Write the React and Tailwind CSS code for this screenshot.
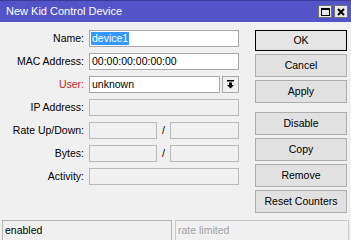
import React from "react";

const font = { fontFamily: '"Liberation Sans", Arial, sans-serif' };

function Label({ children, red }) {
  return (
    <div className={`w-[85px] pr-[1px] text-right text-[10.5px] leading-[17px] ${red ? "text-[#c0282d]" : "text-black"}`}>
      {children}
    </div>
  );
}

function Field({ children, disabled, className = "w-[150px]" }) {
  return (
    <div
      className={`h-[17px] border ${disabled ? "border-[#b9b9b9] bg-[#f0f0f0]" : "border-[#a8a8a8] bg-white"} ${className} flex items-center pl-[2px] text-[10.5px] leading-[15px] text-black overflow-hidden whitespace-nowrap`}
    >
      {children}
    </div>
  );
}

function Row({ label, red, children }) {
  return (
    <div className="flex items-center h-[17px] gap-[4px]">
      <Label red={red}>{label}</Label>
      {children}
    </div>
  );
}

function Btn({ children, ok, className = "h-[23px]" }) {
  return (
    <div
      className={`${className} w-[92px] flex items-center justify-center text-[10.5px] text-black ${ok ? "border border-black bg-[#e5e5e5]" : "border border-[#adadad] bg-[#e1e1e1]"}`}
    >
      {children}
    </div>
  );
}

function Pair() {
  return (
    <div className="flex items-center w-[150px]">
      <Field disabled className="w-[68px]"></Field>
      <span className="w-[13px] text-[10.5px] text-center">/</span>
      <Field disabled className="w-[69px]"></Field>
    </div>
  );
}

export default function App() {
  return (
    <div style={font} className="w-[351px] h-[240px] bg-[#f0f0f0] flex flex-col overflow-hidden">
      <div className="h-[22px] shrink-0 bg-[#5454c9] border-t border-[#3b3b9a] flex items-center justify-between pl-[6px] pr-[3px]">
        <span className="text-[11px] text-white">New Kid Control Device</span>
        <div className="flex gap-[2px]">
          <div className="w-[14px] h-[13px] bg-[#e8e8e8] border border-[#707070] flex items-center justify-center">
            <div className="w-[9px] h-[8px] border border-black border-t-2"></div>
          </div>
          <div className="w-[14px] h-[13px] bg-[#e8e8e8] border border-[#707070] flex items-center justify-center">
            <svg width="8" height="8" viewBox="0 0 8 8">
              <path d="M1 1 L7 7 M7 1 L1 7" stroke="black" strokeWidth="2" />
            </svg>
          </div>
        </div>
      </div>
      <div className="flex flex-1">
        <div className="flex flex-col gap-[6px] pt-[8px] w-[239px]">
          <Row label="Name:">
            <Field>
              <span className="bg-[#3399ff] text-white leading-[13px] px-[1px] -ml-[1px]">device1</span>
            </Field>
          </Row>
          <Row label="MAC Address:">
            <Field>00:00:00:00:00:00</Field>
          </Row>
          <Row label="User:" red>
            <div className="flex items-center w-[150px] gap-[2px]">
              <Field className="w-[131px]">unknown</Field>
              <div className="h-[17px] w-[17px] border border-[#a8a8a8] bg-[#f0f0f0] flex items-center justify-center">
                <svg width="9" height="9" viewBox="0 0 9 9">
                  <rect x="1" y="0" width="7" height="1.5" fill="black" />
                  <path d="M3 2.5 H6 V5 H8 L4.5 8.5 L1 5 H3 Z" fill="black" />
                </svg>
              </div>
            </div>
          </Row>
          <Row label="IP Address:">
            <Field disabled></Field>
          </Row>
          <Row label="Rate Up/Down:">
            <Pair />
          </Row>
          <Row label="Bytes:">
            <Pair />
          </Row>
          <Row label="Activity:">
            <Field disabled></Field>
          </Row>
        </div>
        <div className="ml-[16px] pt-[8px] flex flex-col">
          <Btn ok className="h-[21px]">OK</Btn>
          <div className="h-[3px]" />
          <Btn>Cancel</Btn>
          <div className="h-[3px]" />
          <Btn>Apply</Btn>
          <div className="h-[9px]" />
          <Btn>Disable</Btn>
          <div className="h-[3px]" />
          <Btn>Copy</Btn>
          <div className="h-[3px]" />
          <Btn>Remove</Btn>
          <div className="h-[3px]" />
          <Btn>Reset Counters</Btn>
        </div>
      </div>
      <div className="h-[20px] shrink-0 flex gap-[3px] pl-[2px] pr-[2px]">
        <div className="w-[170px] h-[21px] border border-[#b4b4b4] text-[10.5px] leading-[18px] pl-[2px] text-black">enabled</div>
        <div className="flex-1 h-[21px] border border-[#c8c8c8] text-[10.5px] leading-[18px] pl-[2px] text-[#a0a0a0]">rate limited</div>
      </div>
    </div>
  );
}
